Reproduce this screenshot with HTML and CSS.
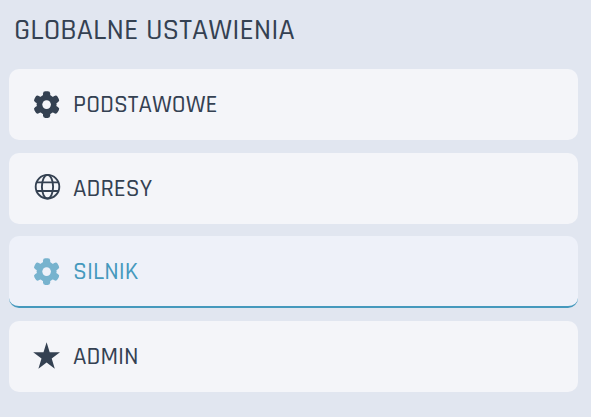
FILE: index.html
```html
<!DOCTYPE html>
<html lang="pl">
<head>
<meta charset="utf-8">
<meta name="viewport" content="width=device-width, initial-scale=1">
<title>Globalne ustawienia</title>
<link rel="stylesheet" href="styles.css">
</head>
<body>
<svg class="defs" aria-hidden="true">
  <defs>
    <mask id="gear-hole" maskUnits="userSpaceOnUse" x="-14" y="-14" width="28" height="28">
      <rect x="-14" y="-14" width="28" height="28" fill="#fff"/>
      <circle r="4.3" fill="#000"/>
    </mask>
    <symbol id="gear" viewBox="-14 -14 28 28">
      <g mask="url(#gear-hole)" transform="translate(-.4 -.4)">
        <circle r="10"/>
        <rect x="-3.6" y="-13.4" width="7.2" height="26.8" rx="2.4"/>
        <rect x="-3.6" y="-13.4" width="7.2" height="26.8" rx="2.4" transform="rotate(60)"/>
        <rect x="-3.6" y="-13.4" width="7.2" height="26.8" rx="2.4" transform="rotate(120)"/>
      </g>
    </symbol>
  </defs>
</svg>
<main class="settings">
  <h1 class="title">GLOBALNE USTAWIENIA</h1>
  <nav class="menu">
    <a class="item" href="#podstawowe">
      <svg class="icon" aria-hidden="true"><use href="#gear"/></svg>
      <span>PODSTAWOWE</span>
    </a>
    <a class="item" href="#adresy">
      <svg class="icon" viewBox="-14 -14 28 28" aria-hidden="true">
        <g fill="none" stroke="currentColor" stroke-width="1.9" transform="translate(.5 -2.3)">
          <circle r="11.8"/>
          <ellipse rx="5.6" ry="11.8"/>
          <path d="M-11-4.3H11M-11 4.3H11"/>
        </g>
      </svg>
      <span>ADRESY</span>
    </a>
    <a class="item item-active" href="#silnik" aria-current="page">
      <svg class="icon" aria-hidden="true"><use href="#gear"/></svg>
      <span>SILNIK</span>
    </a>
    <a class="item" href="#admin">
      <svg class="icon" viewBox="-14 -14 28 28" aria-hidden="true">
        <path transform="translate(-.4 -.5)" d="M0-14.2L3.1-4.2H13.4L5.1 2L8.2 12.2L0 6L-8.2 12.2L-5.1 2L-13.4-4.2H-3.1Z"/>
      </svg>
      <span>ADMIN</span>
    </a>
  </nav>
</main>
</body>
</html>
```
FILE: styles.css
```css
* {
  box-sizing: border-box;
}

body {
  margin: 0;
  background: #e1e6f0;
  color: #344152;
  font-family: Rajdhani, Roboto, sans-serif;
  font-weight: 500;
}

.defs {
  position: absolute;
  width: 0;
  height: 0;
}

.settings {
  padding: 12px 13px 24px 9px;
}

.title {
  margin: 0 0 21px;
  padding-left: 5px;
  font-size: 30px;
  line-height: 36px;
  font-weight: 500;
}

.menu {
  display: flex;
  flex-direction: column;
  gap: 13px;
}

.item {
  display: flex;
  align-items: center;
  gap: 12px;
  padding: 21px 24px 18px;
  border-bottom: 2px solid transparent;
  border-radius: 10px;
  background: #f4f5f9;
  color: inherit;
  font-size: 25px;
  line-height: 30px;
  text-decoration: none;
}

.item-active {
  padding-bottom: 19px;
  margin-top: -1px;
  border-bottom-color: #4599bd;
  background: #eef1f9;
  color: #4599bd;
}

.icon {
  flex: none;
  width: 28px;
  height: 28px;
  overflow: visible;
  fill: currentColor;
}

.item-active .icon {
  opacity: 0.7;
}
```
